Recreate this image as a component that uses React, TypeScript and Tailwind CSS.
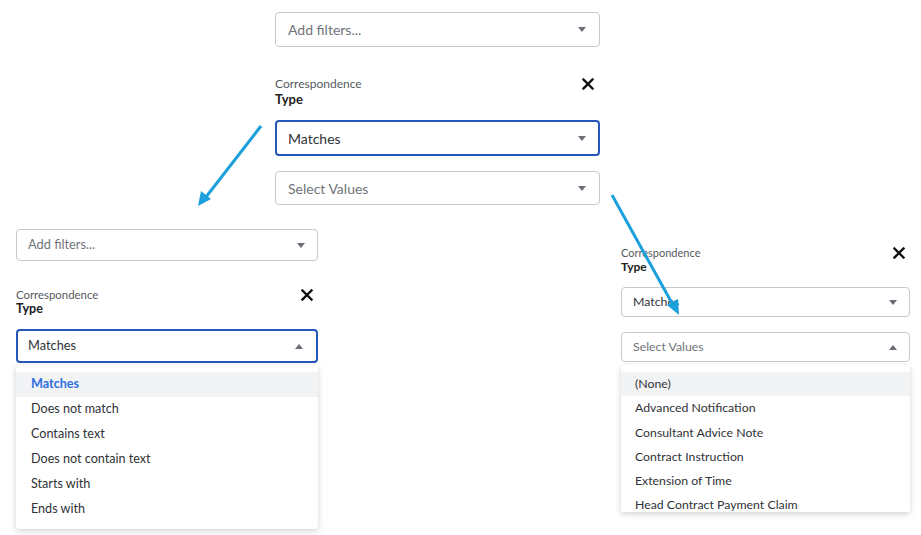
import React from 'react';

const Caret: React.FC<{ up?: boolean }> = ({ up }) => (
  <svg width="8" height="5" viewBox="0 0 8 5" className="shrink-0">
    {up ? <path d="M0 5 L4 0 L8 5 Z" fill="#6b6f75" /> : <path d="M0 0 L8 0 L4 5 Z" fill="#6b6f75" />}
  </svg>
);

const CloseIcon: React.FC = () => (
  <svg width="12" height="12" viewBox="0 0 12 12">
    <path d="M1.5 1.5 L10.5 10.5 M10.5 1.5 L1.5 10.5" stroke="#111" strokeWidth="2.4" strokeLinecap="square" />
  </svg>
);

interface SelectProps {
  text: string;
  placeholder?: boolean;
  active?: boolean;
  open?: boolean;
  h: string;
  textSize: string;
  px: string;
}

const SelectBox: React.FC<SelectProps> = ({ text, placeholder, active, open, h, textSize, px }) => (
  <div
    className={`flex items-center justify-between rounded-[4px] bg-white ${h} ${px} ${
      active ? 'border-2 border-[#2557b9]' : 'border border-[#c5c9ce]'
    }`}
  >
    <span className={`${textSize} ${placeholder ? 'text-[#6f747a]' : 'text-[#2f3237]'}`}>{text}</span>
    <Caret up={open} />
  </div>
);

const Label: React.FC<{ small: string; big: string }> = ({ small, big }) => (
  <div className="flex flex-col">
    <span className={`${small} text-[#555a60]`}>Correspondence</span>
    <span className={`${big} font-bold text-[#222]`}>Type</span>
  </div>
);

const operators = ['Matches', 'Does not match', 'Contains text', 'Does not contain text', 'Starts with', 'Ends with'];
const values = [
  '(None)',
  'Advanced Notification',
  'Consultant Advice Note',
  'Contract Instruction',
  'Extension of Time',
  'Head Contract Payment Claim',
];

export default function App() {
  return (
    <div
      className="relative w-[921px] h-[535px] overflow-hidden bg-white"
      style={{ fontFamily: 'Lato, "Open Sans", sans-serif' }}
    >
      {/* top panel */}
      <div className="pl-[275px] pt-[12px]">
        <div className="w-[325px] flex flex-col">
          <SelectBox text="Add filters..." placeholder h="h-[35px]" textSize="text-[14px]" px="pl-[12px] pr-[13px]" />
          <div className="mt-[30px] flex items-start justify-between pr-[6px]">
            <Label small="text-[12px] leading-[14px]" big="text-[13px] leading-[16px]" />
            <div className="mt-[1px]">
              <CloseIcon />
            </div>
          </div>
          <div className="mt-[13px]">
            <SelectBox text="Matches" active h="h-[36px]" textSize="text-[14px]" px="pl-[11px] pr-[12px]" />
          </div>
          <div className="mt-[15px]">
            <SelectBox text="Select Values" placeholder h="h-[34px]" textSize="text-[14px]" px="pl-[12px] pr-[13px]" />
          </div>
        </div>
      </div>

      <div className="flex items-start">
        {/* left panel */}
        <div className="ml-[16px] mt-[24px] w-[302px] flex flex-col">
          <SelectBox text="Add filters..." placeholder h="h-[32px]" textSize="text-[12.8px]" px="pl-[11px] pr-[12px]" />
          <div className="mt-[27px] flex items-start justify-between pr-[5px]">
            <Label small="text-[11.4px] leading-[13px]" big="text-[12.5px] leading-[15px]" />
            <div className="mt-[1px]">
              <CloseIcon />
            </div>
          </div>
          <div className="mt-[13px]">
            <SelectBox text="Matches" active open h="h-[34px]" textSize="text-[12.8px]" px="pl-[10px] pr-[13px]" />
          </div>
          <div className="mt-[2px] rounded-b-[4px] bg-white pt-[7px] pb-[7px] shadow-[0_2px_6px_rgba(0,0,0,0.18)]">
            {operators.map((o, i) => (
              <div
                key={o}
                className={`h-[25px] flex items-center pl-[15px] text-[12.6px] ${
                  i === 0 ? 'bg-[#f2f3f5] text-[#2f6fe0] font-bold' : 'text-[#2f3237]'
                }`}
              >
                {o}
              </div>
            ))}
          </div>
        </div>

        {/* right panel */}
        <div className="ml-auto mr-[11px] mt-[41px] w-[289px] flex flex-col">
          <div className="flex items-start justify-between pr-[5px]">
            <Label small="text-[11px] leading-[13px]" big="text-[12px] leading-[15px]" />
            <div className="mt-[1px]">
              <CloseIcon />
            </div>
          </div>
          <div className="mt-[13px]">
            <SelectBox text="Matches" h="h-[30px]" textSize="text-[12.3px]" px="pl-[11px] pr-[12px]" />
          </div>
          <div className="mt-[15px]">
            <SelectBox text="Select Values" placeholder open h="h-[30px]" textSize="text-[12.3px]" px="pl-[11px] pr-[12px]" />
          </div>
          <div className="mt-[3px] h-[147px] overflow-hidden bg-white pt-[7px] shadow-[0_2px_6px_rgba(0,0,0,0.18)]">
            {values.map((v, i) => (
              <div
                key={v}
                className={`h-[24.3px] flex items-center pl-[14px] text-[12.3px] text-[#2f3237] ${
                  i === 0 ? 'bg-[#f2f3f5]' : ''
                }`}
              >
                {v}
              </div>
            ))}
          </div>
        </div>
      </div>

      {/* annotation arrows */}
      <svg className="absolute inset-0 pointer-events-none" width="921" height="535">
        <line x1="261" y1="126" x2="206" y2="197" stroke="#1ba0db" strokeWidth="3" />
        <path d="M198 206 L201 191 L211 199 Z" fill="#1ba0db" />
        <line x1="612" y1="195" x2="673" y2="305" stroke="#1ba0db" strokeWidth="3" />
        <path d="M679 315 L667 305 L678 299 Z" fill="#1ba0db" />
      </svg>
    </div>
  );
}
